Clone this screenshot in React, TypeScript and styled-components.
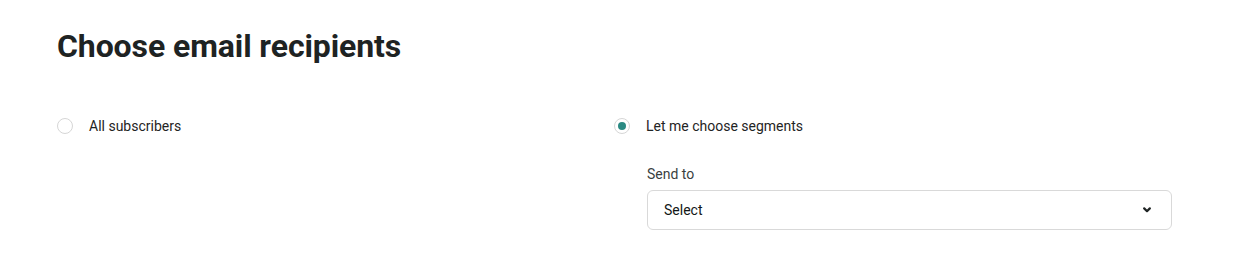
import React from "react";
import styled, { createGlobalStyle } from "styled-components";

const Global = createGlobalStyle`
  html, body { margin: 0; padding: 0; background: #ffffff; }
  body { font-family: Roboto, "Liberation Sans", Arial, sans-serif; color: #1f2424; }
  * { box-sizing: border-box; }
`;

const Page = styled.div`
  padding: 27px 57px 0 57px;
`;

const Title = styled.h1`
  margin: 0;
  font-size: 32px;
  line-height: 38px;
  font-weight: 700;
  letter-spacing: -0.1px;
  color: #1e2323;
`;

const Columns = styled.div`
  display: grid;
  grid-template-columns: 557px 557px;
  margin-top: 51px;
`;

const Column = styled.div`
  display: flex;
  flex-direction: column;
`;

const RadioRow = styled.label`
  display: flex;
  align-items: center;
  gap: 16px;
  height: 20px;
  font-size: 14px;
  color: #1f2424;
  cursor: pointer;
`;

const RadioCircle = styled.span<{ $checked?: boolean }>`
  width: 16px;
  height: 16px;
  border-radius: 50%;
  border: 1px solid #d6d6d6;
  background: #fff;
  display: flex;
  align-items: center;
  justify-content: center;
  flex-shrink: 0;
  &::after {
    content: "";
    width: 8px;
    height: 8px;
    border-radius: 50%;
    background: ${(p) => (p.$checked ? "#2b8a83" : "transparent")};
  }
`;

const Nested = styled.div`
  padding-left: 33px;
  margin-top: 30px;
  display: flex;
  flex-direction: column;
`;

const FieldLabel = styled.div`
  font-size: 14px;
  line-height: 16px;
  color: #3a3f3f;
  margin-bottom: 8px;
`;

const SelectBox = styled.div`
  width: 525px;
  height: 40px;
  border: 1px solid #d9d9d9;
  border-radius: 6px;
  display: flex;
  align-items: center;
  justify-content: space-between;
  padding: 0 20px 0 16px;
  font-size: 14px;
  font-weight: 400;
  color: #111616;
`;

const Chevron = () => (
  <svg width="8" height="6" viewBox="0 0 8 6" fill="none">
    <path d="M1.2 1.4 L4 4.2 L6.8 1.4" stroke="#1f2424" strokeWidth="2.2" strokeLinecap="round" strokeLinejoin="round" />
  </svg>
);

export default function App() {
  return (
    <>
      <Global />
      <Page>
        <Title>Choose email recipients</Title>
        <Columns>
          <Column>
            <RadioRow>
              <RadioCircle />
              All subscribers
            </RadioRow>
          </Column>
          <Column>
            <RadioRow>
              <RadioCircle $checked />
              Let me choose segments
            </RadioRow>
            <Nested>
              <FieldLabel>Send to</FieldLabel>
              <SelectBox>
                Select
                <Chevron />
              </SelectBox>
            </Nested>
          </Column>
        </Columns>
      </Page>
    </>
  );
}
